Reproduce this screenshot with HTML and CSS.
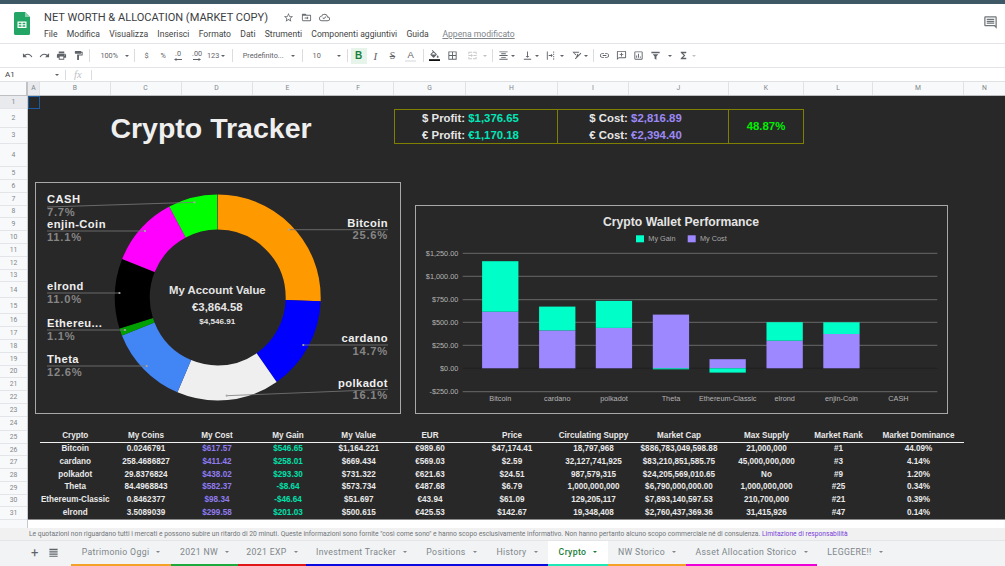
FILE: index.html
```html
<!DOCTYPE html>
<html lang="it">
<head>
<meta charset="utf-8">
<title>NET WORTH &amp; ALLOCATION (MARKET COPY)</title>
<link rel="stylesheet" href="styles.css">
</head>
<body>
<div class="app">
  <div class="strip"></div>
  <header class="doc">
    <svg class="logo" viewBox="0 0 16 23"><path class="logo-body" d="M1.500 0H11l5 5v16.500a1.500 1.500 0 0 1-1.500 1.500h-13A1.500 1.500 0 0 1 0 21.500v-20A1.500 1.500 0 0 1 1.500 0z"/><path class="logo-fold" d="M11 0l5 5h-5z"/><path class="logo-grid" d="M3.500 9.500h9v6.500h-9zM4.700 10.700v1.500h2.700v-1.500zm3.900 0v1.500h2.700v-1.500zM4.700 13.300v1.500h2.700v-1.500zm3.900 0v1.500h2.700v-1.500z" fill-rule="evenodd"/></svg>
    <div class="doc-main">
      <div class="doc-title">
        <span class="doc-name">NET WORTH &amp; ALLOCATION (MARKET COPY)</span>
        <svg class="doc-ico" viewBox="0 0 24 24"><path d="M22 9.240l-7.190-.62L12 2 9.190 8.630 2 9.240l5.460 4.730L5.820 21 12 17.270 18.180 21l-1.630-7.030L22 9.240zM12 15.400l-3.760 2.270 1-4.280-3.320-2.880 4.380-.38L12 6.100l1.710 4.040 4.380.38-3.320 2.880 1 4.280L12 15.400z"/></svg>
        <svg class="doc-ico" viewBox="0 0 24 24"><path d="M20 6h-8l-2-2H4c-1.100 0-2 .9-2 2v12c0 1.100.9 2 2 2h16c1.100 0 2-.9 2-2V8c0-1.100-.9-2-2-2zm0 12H4V8h16v10z"/><path d="M13 9.500l3.500 3.500-3.500 3.500v-2.500H8v-2h5z"/></svg>
        <svg class="doc-ico" viewBox="0 0 24 24"><path d="M19.350 10.040C18.670 6.590 15.640 4 12 4 9.110 4 6.600 5.640 5.350 8.040 2.340 8.360 0 10.910 0 14c0 3.310 2.690 6 6 6h13c2.760 0 5-2.240 5-5 0-2.640-2.050-4.780-4.650-4.960zM19 18H6c-2.210 0-4-1.790-4-4 0-2.050 1.530-3.760 3.560-3.970l1.070-.11.5-.95C8.080 7.140 9.940 6 12 6c2.620 0 4.880 1.860 5.390 4.430l.3 1.500 1.530.11c1.560.1 2.780 1.410 2.780 2.960 0 1.650-1.350 3-3 3z"/><path d="M10.500 16l-3-3 1.300-1.300 1.700 1.700 4-4 1.300 1.300z"/></svg>
      </div>
      <nav class="menu">
        <span>File</span><span>Modifica</span><span>Visualizza</span><span>Inserisci</span><span>Formato</span><span>Dati</span><span>Strumenti</span><span>Componenti aggiuntivi</span><span>Guida</span><span class="saved">Appena modificato</span>
      </nav>
    </div>
    <svg class="chat" viewBox="0 0 24 24"><path d="M21.990 4c0-1.100-.89-2-1.990-2H4c-1.100 0-2 .9-2 2v12c0 1.100.9 2 2 2h14l4 4-.01-18zM20 4v13.170L18.830 16H4V4h16z"/><path d="M6 6h12v2H6zm0 3h12v2H6zm0 3h12v2H6z"/></svg>
  </header>

  <div class="toolbar">
    <span class="tb"><svg viewBox="0 0 24 24"><path d="M12.500 8c-2.650 0-5.050.99-6.900 2.600L2 7v9h9l-3.620-3.620c1.390-1.160 3.160-1.880 5.120-1.880 3.540 0 6.550 2.310 7.600 5.500l2.370-.78C21.080 11.030 17.150 8 12.500 8z"/></svg></span>
    <span class="tb"><svg viewBox="0 0 24 24"><path d="M18.400 10.600C16.550 8.990 14.150 8 11.500 8c-4.650 0-8.580 3.030-9.960 7.220L3.900 16c1.050-3.190 4.050-5.500 7.600-5.500 1.950 0 3.730.72 5.120 1.880L13 16h9V7l-3.600 3.600z"/></svg></span>
    <span class="tb"><svg viewBox="0 0 24 24"><path d="M19 8H5c-1.660 0-3 1.340-3 3v6h4v4h12v-4h4v-6c0-1.660-1.340-3-3-3zm-3 11H8v-5h8v5zm3-7c-.55 0-1-.45-1-1s.45-1 1-1 1 .45 1 1-.45 1-1 1zm-1-9H6v4h12V3z"/></svg></span>
    <span class="tb"><svg viewBox="0 0 24 24"><path d="M18 4V3c0-.55-.45-1-1-1H5c-.55 0-1 .45-1 1v4c0 .55.45 1 1 1h12c.55 0 1-.45 1-1V6h1v4H9v11c0 .55.45 1 1 1h2c.55 0 1-.45 1-1v-9h8V4h-3z"/></svg></span>
    <i class="sep ml-2"></i>
    <span class="tb w17 ml-10h">100%</span><i class="caret ml-7"></i>
    <i class="sep ml-5h"></i>
    <span class="tb w16 ml-3">$</span>
    <span class="tb w16">%</span>
    <span class="tb tb-dec w13"><span>.0</span><svg viewBox="0 0 8 3"><path d="M8 1.100H2.500V0L0 1.500 2.500 3V1.900H8z"/></svg></span>
    <span class="tb tb-dec w20 ml-2h"><span>.00</span><svg viewBox="0 0 8 3"><path d="M0 1.100h5.500V0L8 1.500 5.500 3V1.900H0z"/></svg></span>
    <span class="tb w10 ml-1">123</span><i class="caret ml-2h"></i>
    <i class="sep ml-7"></i>
    <span class="tb w41 ml-10">Predefinito...</span><i class="caret ml-7h"></i>
    <i class="sep ml-7"></i>
    <span class="tb w8 ml-9h">10</span><i class="caret ml-16h"></i>
    <i class="sep ml-5h"></i>
    <span class="tb tb-b ml-3">B</span>
    <span class="tb tb-i">I</span>
    <span class="tb tb-s">S</span>
    <span class="tb tb-a ml-1"><span>A</span></span>
    <i class="sep ml-4"></i>
    <span class="tb tb-fill ml-2"><svg viewBox="0 0 24 24"><path d="M16.560 8.940L7.620 0 6.210 1.410l2.380 2.380-5.150 5.150c-.59.59-.59 1.540 0 2.120l5.500 5.500c.29.29.68.44 1.060.44s.77-.15 1.060-.44l5.500-5.500c.59-.58.59-1.530 0-2.120zM5.210 10L10 5.210 14.790 10H5.210zM19 11.500s-2 2.170-2 3.500c0 1.100.9 2 2 2s2-.9 2-2c0-1.330-2-3.500-2-3.500z"/><path class="fill-bar" d="M0 20h24v4H0z"/></svg></span>
    <span class="tb ml-1"><svg viewBox="0 0 24 24"><path d="M3 3v18h18V3H3zm8 16H5v-6h6v6zm0-8H5V5h6v6zm8 8h-6v-6h6v6zm0-8h-6V5h6v6z"/></svg></span>
    <span class="tb tb-off ml-2"><svg viewBox="0 0 24 24"><path d="M3 4h8v2H5v3H3zm10 0h8v5h-2V6h-6zM3 15h2v3h6v2H3zm16 0h2v5h-8v-2h6zM3 11h7l-2-2 1.500-.5L13 12l-3.500 3.500L8 15l2-2H3zm18 0v2h-7v-2z"/></svg></span><i class="caret caret-off ml-2"></i>
    <i class="sep ml-5h"></i>
    <span class="tb ml-1h"><svg viewBox="0 0 24 24"><path d="M7 15v2h10v-2H7zm-4 6h18v-2H3v2zm0-8h18v-2H3v2zm4-6v2h10V7H7zM3 3v2h18V3H3z"/></svg></span><i class="caret mr-neg"></i>
    <span class="tb ml-3h"><svg viewBox="0 0 24 24"><path d="M16 13h-3V3h-2v10H8l4 4 4-4zM4 19v2h16v-2H4z"/></svg></span><i class="caret mr-neg"></i>
    <span class="tb ml-3"><svg viewBox="0 0 24 24"><path d="M4 3h2v18H4zM18 3h2v3h-2zm0 5h2v3h-2zm0 5h2v3h-2zm0 5h2v3h-2zM8 11h5V8l4 4-4 4v-3H8z"/></svg></span><i class="caret ml-1"></i>
    <span class="tb ml-3"><svg viewBox="0 0 24 24"><path d="M3 4h15l-1 2H6.500l5 4-1.500 1.500zM21 6l1.500 1.500L10 20l-1.500-1.500zM14 8l2 1-3 8-2-1z"/></svg></span><i class="caret mr-neg"></i>
    <i class="sep ml-5"></i>
    <span class="tb ml-1h"><svg viewBox="0 0 24 24"><path d="M3.900 12c0-1.710 1.390-3.100 3.100-3.100h4V7H7c-2.760 0-5 2.240-5 5s2.240 5 5 5h4v-1.900H7c-1.710 0-3.100-1.390-3.100-3.100zM8 13h8v-2H8v2zm9-6h-4v1.900h4c1.710 0 3.100 1.390 3.100 3.100s-1.390 3.100-3.100 3.100h-4V17h4c2.760 0 5-2.240 5-5s-2.240-5-5-5z"/></svg></span>
    <span class="tb"><svg viewBox="0 0 24 24"><path d="M20 2H4c-1.100 0-2 .9-2 2v18l4-4h14c1.100 0 2-.9 2-2V4c0-1.100-.9-2-2-2zm0 14H6l-2 2V4h16v12z"/><path d="M13 6h-2v3H8v2h3v3h2v-3h3V9h-3z"/></svg></span>
    <span class="tb"><svg viewBox="0 0 24 24"><path d="M19 3H5c-1.100 0-2 .9-2 2v14c0 1.100.9 2 2 2h14c1.100 0 2-.9 2-2V5c0-1.100-.9-2-2-2zm0 16H5V5h14v14zM7 12h2v5H7zm4-4h2v9h-2zm4 6h2v3h-2z"/></svg></span>
    <span class="tb"><svg viewBox="0 0 24 24"><path d="M3 4h18v3H3zm3 5h12l-4 5v7l-4-2v-5z"/></svg></span><i class="caret ml-3h"></i>
    <span class="tb ml-3h"><svg viewBox="0 0 24 24"><path d="M18 4H6v2l6.500 6L6 18v2h12v-3h-7l5-5-5-5h7z"/></svg></span><i class="caret caret-off"></i>
  </div>

  <div class="formula">
    <span class="cellref">A1</span><i class="caret caret-ref"></i>
    <i class="sep sep-f"></i>
    <span class="fx">fx</span>
    <i class="sep sep-f"></i>
  </div>

  <div class="colhead">
    <span class="corner"></span>
    <span class="ch ch-a ch-on">A</span><span class="ch ch-b">B</span><span class="ch ch-n71">C</span><span class="ch ch-n71">D</span><span class="ch ch-n71">E</span><span class="ch ch-f">F</span><span class="ch ch-g">G</span><span class="ch ch-h">H</span><span class="ch ch-n71">I</span><span class="ch ch-j">J</span><span class="ch ch-k">K</span><span class="ch ch-l">L</span><span class="ch ch-m">M</span><span class="ch ch-last">N</span>
  </div>

  <div class="sheet">
    <div class="rowhead">
      <span class="rh rh-on r1">1</span><span class="rh r2">2</span><span class="rh r3">3</span><span class="rh r4">4</span><span class="rh r1">5</span><span class="rh">6</span><span class="rh">7</span><span class="rh">8</span><span class="rh">9</span><span class="rh">10</span><span class="rh">11</span><span class="rh">12</span><span class="rh">13</span><span class="rh r3">14</span><span class="rh r3">15</span><span class="rh">16</span><span class="rh">17</span><span class="rh">18</span><span class="rh">19</span><span class="rh">20</span><span class="rh">21</span><span class="rh">22</span><span class="rh">23</span><span class="rh r24">24</span><span class="rh r1">25</span><span class="rh r7">26</span><span class="rh r7">27</span><span class="rh r7">28</span><span class="rh r7">29</span><span class="rh r7">30</span><span class="rh r7">31</span><span class="rh"></span>
    </div>
    <div class="pane">
      <div class="cells">
        <div class="a1"></div>
        <h1 class="big-title">Crypto Tracker</h1>
        <div class="sum sum-1">
          <p>$ Profit: <b class="c-gain">$1,376.65</b></p>
          <p>€ Profit: <b class="c-gain">€1,170.18</b></p>
        </div>
        <div class="sum sum-2">
          <p>$ Cost: <b class="c-cost">$2,816.89</b></p>
          <p>€ Cost: <b class="c-cost">€2,394.40</b></p>
        </div>
        <div class="sum sum-3"><p class="c-pct">48.87%</p></div>

        <div class="tbl">
          <div class="th">Crypto</div><div class="th">My Coins</div><div class="th">My Cost</div><div class="th">My Gain</div><div class="th">My Value</div><div class="th">EUR</div><div class="th">Price</div><div class="th">Circulating Suppy</div><div class="th">Market Cap</div><div class="th">Max Supply</div><div class="th">Market Rank</div><div class="th">Market Dominance</div>
          <div>Bitcoin</div><div>0.0246791</div><div class="t-cost">$617.57</div><div class="t-gain">$546.65</div><div>$1,164.221</div><div>€989.60</div><div>$47,174.41</div><div>18,797,968</div><div>$886,783,049,598.88</div><div>21,000,000</div><div>#1</div><div>44.09%</div>
          <div>cardano</div><div>258.4686827</div><div class="t-cost">$411.42</div><div class="t-gain">$258.01</div><div>$669.434</div><div>€569.03</div><div>$2.59</div><div>32,127,741,925</div><div>$83,210,851,585.75</div><div>45,000,000,000</div><div>#3</div><div>4.14%</div>
          <div>polkadot</div><div>29.8376824</div><div class="t-cost">$438.02</div><div class="t-gain">$293.30</div><div>$731.322</div><div>€621.63</div><div>$24.51</div><div>987,579,315</div><div>$24,205,569,010.65</div><div>No</div><div>#9</div><div>1.20%</div>
          <div>Theta</div><div>84.4968843</div><div class="t-cost">$582.37</div><div class="t-gain">-$8.64</div><div>$573.734</div><div>€487.68</div><div>$6.79</div><div>1,000,000,000</div><div>$6,790,000,000.00</div><div>1,000,000,000</div><div>#25</div><div>0.34%</div>
          <div>Ethereum-Classic</div><div>0.8462377</div><div class="t-cost">$98.34</div><div class="t-gain">-$46.64</div><div>$51.697</div><div>€43.94</div><div>$61.09</div><div>129,205,117</div><div>$7,893,140,597.53</div><div>210,700,000</div><div>#21</div><div>0.39%</div>
          <div>elrond</div><div>3.5089039</div><div class="t-cost">$299.58</div><div class="t-gain">$201.03</div><div>$500.615</div><div>€425.53</div><div>$142.67</div><div>19,348,408</div><div>$2,760,437,369.36</div><div>31,415,926</div><div>#47</div><div>0.14%</div>
        </div>
      </div>

      <figure class="chart chart-pie">
        <svg viewBox="36 183 364 230">
          <g class="donut" transform="rotate(-90 217.700 297.500)">
            <circle class="s" cx="217.700" cy="297.500" r="85.500" pathLength="100" stroke="#ff9900" stroke-dasharray="25.6 74.4" stroke-dashoffset="0"/>
            <circle class="s" cx="217.700" cy="297.500" r="85.500" pathLength="100" stroke="#0000ff" stroke-dasharray="14.7 85.3" stroke-dashoffset="-25.6"/>
            <circle class="s" cx="217.700" cy="297.500" r="85.500" pathLength="100" stroke="#efefef" stroke-dasharray="16.1 83.9" stroke-dashoffset="-40.3"/>
            <circle class="s" cx="217.700" cy="297.500" r="85.500" pathLength="100" stroke="#4285f4" stroke-dasharray="12.6 87.4" stroke-dashoffset="-56.4"/>
            <circle class="s" cx="217.700" cy="297.500" r="85.500" pathLength="100" stroke="#00a000" stroke-dasharray="1.1 98.9" stroke-dashoffset="-69"/>
            <circle class="s" cx="217.700" cy="297.500" r="85.500" pathLength="100" stroke="#000000" stroke-dasharray="11 89" stroke-dashoffset="-70.1"/>
            <circle class="s" cx="217.700" cy="297.500" r="85.500" pathLength="100" stroke="#ff00ff" stroke-dasharray="11.1 88.9" stroke-dashoffset="-81.1"/>
            <circle class="s" cx="217.700" cy="297.500" r="85.500" pathLength="100" stroke="#00ff00" stroke-dasharray="7.7 92.3" stroke-dashoffset="-92.2"/>
          </g>
          <g class="leaders">
            <path d="M47 207L194.300 202.300M47 231H145M47 293H119.500M47 330H125M47 366H146.700M388 229.700H288.700M388 345H303.300M388 389.300L226.700 395.700"/>
          </g>
          <g class="dots">
            <circle cx="194.300" cy="202.300" r="1.100"/><circle cx="145" cy="231" r="1.100"/><circle cx="119.500" cy="293" r="1.100"/><circle cx="125" cy="330" r="1.100"/><circle cx="146.700" cy="366" r="1.100"/><circle cx="288.700" cy="229.700" r="1.100"/><circle cx="303.300" cy="345" r="1.100"/><circle cx="226.700" cy="395.700" r="1.100"/>
          </g>
          <text class="lb" x="47" y="203.300">CASH</text><text class="pc" x="47" y="215.700">7.7%</text>
          <text class="lb" x="47" y="228.300">enjin-Coin</text><text class="pc" x="47" y="241">11.1%</text>
          <text class="lb" x="47" y="290">elrond</text><text class="pc" x="47" y="302.700">11.0%</text>
          <text class="lb" x="47" y="326.700">Ethereu...</text><text class="pc" x="47" y="339.700">1.1%</text>
          <text class="lb" x="47" y="363">Theta</text><text class="pc" x="47" y="375.700">12.6%</text>
          <text class="lb end" x="388" y="226.700">Bitcoin</text><text class="pc end" x="388" y="239.300">25.6%</text>
          <text class="lb end" x="388" y="342.300">cardano</text><text class="pc end" x="388" y="355">14.7%</text>
          <text class="lb end" x="388" y="386.700">polkadot</text><text class="pc end" x="388" y="399">16.1%</text>
          <text class="ctr ctr-1" x="217.300" y="294.300">My Account Value</text>
          <text class="ctr ctr-1" x="217.300" y="311">€3,864.58</text>
          <text class="ctr ctr-2" x="217.300" y="324.300">$4,546.91</text>
        </svg>
      </figure>

      <figure class="chart chart-bar">
        <svg viewBox="416 206 531 207">
          <text class="bt" x="681" y="225.700">Crypto Wallet Performance</text>
          <rect class="gain" x="636" y="235.300" width="8" height="7"/><text class="lg" x="648.300" y="241.300">My Gain</text>
          <rect class="cost" x="687.700" y="235.300" width="8" height="7"/><text class="lg" x="700" y="241.300">My Cost</text>
          <g class="gl">
            <path d="M462.700 253.300H937.300M462.700 276.300H937.300M462.700 299.700H937.300M462.700 322.300H937.300M462.700 345.300H937.300M462.700 391.700H937.300"/>
          </g>
          <path class="gl0" d="M462.700 368.300H937.300"/>
          <text class="ax" x="458.300" y="255.900">$1,250.00</text>
          <text class="ax" x="458.300" y="278.900">$1,000.00</text>
          <text class="ax" x="458.300" y="302.300">$750.00</text>
          <text class="ax" x="458.300" y="324.900">$500.00</text>
          <text class="ax" x="458.300" y="347.900">$250.00</text>
          <text class="ax" x="458.300" y="370.900">$0.00</text>
          <text class="ax" x="458.300" y="394.300">-$250.00</text>
          <rect class="cost" x="482.100" y="311.700" width="36.300" height="56.600"/><rect class="gain" x="482.100" y="261.200" width="36.300" height="50.500"/>
          <rect class="cost" x="539.100" y="330.400" width="36.300" height="37.900"/><rect class="gain" x="539.100" y="306.600" width="36.300" height="23.800"/>
          <rect class="cost" x="595.800" y="327.900" width="36.300" height="40.400"/><rect class="gain" x="595.800" y="300.900" width="36.300" height="27"/>
          <rect class="cost" x="652.800" y="314.600" width="36.300" height="53.700"/><rect class="gain" x="652.800" y="368.300" width="36.300" height="1"/>
          <rect class="cost" x="709.500" y="359.200" width="36.300" height="9.100"/><rect class="gain" x="709.500" y="368.300" width="36.300" height="4.300"/>
          <rect class="cost" x="766.500" y="340.700" width="36.300" height="27.600"/><rect class="gain" x="766.500" y="322.200" width="36.300" height="18.500"/>
          <rect class="cost" x="823.300" y="334" width="36.300" height="34.300"/><rect class="gain" x="823.300" y="322.300" width="36.300" height="11.700"/>
          <text class="cat" x="500.300" y="400.700">Bitcoin</text>
          <text class="cat" x="557.300" y="400.700">cardano</text>
          <text class="cat" x="614" y="400.700">polkadot</text>
          <text class="cat" x="671" y="400.700">Theta</text>
          <text class="cat" x="727.700" y="400.700">Ethereum-Classic</text>
          <text class="cat" x="784.700" y="400.700">elrond</text>
          <text class="cat" x="841.500" y="400.700">enjin-Coin</text>
          <text class="cat" x="898.400" y="400.700">CASH</text>
        </svg>
      </figure>
    </div>
  </div>

  <div class="notice">Le quotazioni non riguardano tutti i mercati e possono subire un ritardo di 20 minuti. Queste informazioni sono fornite "così come sono" e hanno scopo esclusivamente informativo. Non hanno pertanto alcuno scopo commerciale né di consulenza. <a class="notice-link">Limitazione di responsabilità</a></div>

  <div class="tabs">
    <div class="tab-tools">
      <span class="plus">+</span>
      <svg class="allsheets" viewBox="0 0 24 24"><path d="M3 4h18v3H3zm0 5h18v3H3zm0 5h18v3H3zm0 5h18v2H3z"/></svg>
    </div>
    <span class="tab t-pat st-orange">Patrimonio Oggi<i class="caret caret-tab"></i></span>
    <span class="tab t-nw st-green">2021 NW<i class="caret caret-tab"></i></span>
    <span class="tab t-exp st-red">2021 EXP<i class="caret caret-tab"></i></span>
    <span class="tab t-inv st-blue">Investment Tracker<i class="caret caret-tab"></i></span>
    <span class="tab t-pos st-blue">Positions<i class="caret caret-tab"></i></span>
    <span class="tab t-his st-blue">History<i class="caret caret-tab"></i></span>
    <span class="tab t-cry st-teal tab-on">Crypto<i class="caret caret-tab"></i></span>
    <span class="tab t-sto st-orange">NW Storico<i class="caret caret-tab"></i></span>
    <span class="tab t-ass st-mag">Asset Allocation Storico<i class="caret caret-tab"></i></span>
    <span class="tab t-leg st-none">LEGGERE!!<i class="caret caret-tab"></i></span>
    <span class="tab-rest"></span>
  </div>
</div>
</body>
</html>
```
FILE: styles.css
```css
* { box-sizing: border-box; margin: 0; padding: 0; }
html, body { height: 100%; overflow: hidden; background: #fff; }
body { font-family: Roboto, "Liberation Sans", sans-serif; color: #3c4043; }
.app { width: 1005px; height: 566px; display: flex; flex-direction: column; overflow: hidden; }
i { font-style: normal; }

.strip { height: 4px; background: #3f5866; flex: none; }

/* document header */
.doc { height: 40px; flex: none; display: flex; align-items: flex-start; border-bottom: 1px solid #e3e5e8; }
.logo { width: 16px; height: 23px; margin: 8px 0 0 14px; flex: none; }
.logo-body { fill: #23a566; }
.logo-fold { fill: #8ed1b1; }
.logo-grid { fill: #fff; }
.doc-main { margin-left: 14px; flex: 1; }
.doc-title { display: flex; align-items: center; height: 17px; margin-top: 4.500px; }
.doc-name { font-size: 11.050px; color: #3c4043; width: 238.500px; white-space: nowrap; }
.doc-ico { width: 11px; height: 11px; fill: #6b6f73; margin-right: 7px; flex: none; }
.menu { display: flex; font-size: 8.600px; color: #444; margin-top: 2.500px; gap: 9.250px; line-height: 12px; }
.saved { color: #80868b; text-decoration: underline; margin-left: 4.500px; }
.chat { width: 15px; height: 15px; fill: #70757a; flex: none; margin: 11px 7px 0 0; }

/* toolbar: every control sits at the reference's own spacing */
.toolbar { height: 24px; flex: none; display: flex; align-items: center; border-bottom: 1px solid #e3e5e8; padding-left: 18.500px; }
.tb { width: 17.200px; height: 16px; display: flex; align-items: center; justify-content: center; flex: none; font-size: 7.300px; color: #5f6368; white-space: nowrap; }
.tb svg { width: 11px; height: 11px; fill: #5f6368; }
.sep { width: 1px; height: 13px; background: #dadce0; flex: none; }
.caret { width: 0; height: 0; border-left: 2.500px solid transparent; border-right: 2.500px solid transparent; border-top: 2.500px solid #5f6368; flex: none; }
.ml-1 { margin-left: 1px; }
.ml-1h { margin-left: 1.500px; }
.ml-2 { margin-left: 2px; }
.ml-2h { margin-left: 2.500px; }
.ml-3 { margin-left: 3px; }
.ml-3h { margin-left: 3.500px; }
.ml-4 { margin-left: 4px; }
.ml-5 { margin-left: 5px; }
.ml-5h { margin-left: 5.500px; }
.ml-7 { margin-left: 7px; }
.ml-7h { margin-left: 7.500px; }
.ml-9h { margin-left: 9.500px; }
.ml-10 { margin-left: 10px; }
.ml-10h { margin-left: 10.500px; }
.ml-16h { margin-left: 16.500px; }
.mr-neg { margin-left: -.7px; }
.w8 { width: 8px; }
.w10 { width: 10px; }
.w13 { width: 13px; }
.w16 { width: 16.700px; }
.w17 { width: 17px; }
.w20 { width: 20px; }
.w41 { width: 41px; }
.tb-dec { flex-direction: column; line-height: 8px; font-size: 7.300px; }
.tb-dec svg { width: 8px; height: 3px; }
.tb-b { font-family: "Liberation Sans", sans-serif; width: 16px; background: #e6f4ea; color: #188038; font-weight: 700; font-size: 10px; }
.tb-i { font-family: "Liberation Serif", serif; font-style: italic; font-size: 11px; }
.tb-s { font-family: "Liberation Serif", serif; font-size: 10px; text-decoration: line-through; }
.tb-a { font-family: "Liberation Sans", sans-serif; font-size: 9.500px; }
.tb-a span { border-bottom: 2px solid #e8eaed; padding: 0 2px; line-height: 11px; }
.fill-bar { fill: #111; }
.tb-off svg { fill: #c8cacc; }
.caret-off { border-top-color: #bdc1c6; }

/* formula bar */
.formula { height: 14px; flex: none; display: flex; align-items: center; border-bottom: 1px solid #dfe1e5; }
.cellref { font-size: 8px; color: #3c4043; margin-left: 5px; width: 50px; }
.caret-ref { margin-right: 3px; }
.sep-f { height: 10px; margin: 0 8px 0 3px; }
.fx { font-family: "Liberation Serif", serif; font-style: italic; font-size: 10.500px; color: #bdc1c6; width: 14px; }

/* column headers */
.colhead { height: 14px; flex: none; display: flex; background: #f8f9fa; border-bottom: 1px solid #bdbfc2; }
.corner { width: 28px; flex: none; border-right: 2px solid #c0c2c5; }
.ch { flex: none; font-size: 6.800px; color: #80868b; text-align: center; line-height: 13px; border-right: 1px solid #e0e2e5; }
.ch-on { background: #e8eaed; }
.ch-a { width: 12px; }
.ch-b { width: 70.500px; }
.ch-n71 { width: 71px; }
.ch-f { width: 70.500px; }
.ch-g { width: 72px; }
.ch-h { width: 92px; }
.ch-j { width: 100px; }
.ch-k { width: 75px; }
.ch-l { width: 69px; }
.ch-m { width: 91px; }
.ch-last { width: 41px; border-right: 0; }

/* sheet */
.sheet { height: 432px; flex: none; display: flex; background: #fff; }
.rowhead { width: 28px; flex: none; display: flex; flex-direction: column; background: #f8f9fa; border-right: 1px solid #c8cacd; }
.rh { height: 12.800px; flex: none; font-size: 6.800px; color: #80868b; display: flex; align-items: center; justify-content: center; border-bottom: 1px solid #e3e5e8; }
.rh-on { background: #e8eaed; }
.r1 { height: 13px; }
.r2 { height: 18.500px; }
.r3 { height: 16px; }
.r4 { height: 23.500px; }
.r24 { height: 14px; }
.r7 { height: 12.700px; }
.pane { flex: 1; position: relative; }
.cells {
  height: 424px;
  background: #282828;
  border-bottom: 1px solid #8a8a8a;
  display: grid;
  grid-template-columns: 12px 70.500px 71px 71px 71px 70.500px 72px 92px 71px 100px 75px 69px 91px 41px;
  grid-template-rows: 13px 18.500px 16px 23.500px 13px repeat(8, 12.750px) 16px 16px repeat(8, 12.800px) 14px 13px repeat(6, 12.700px);
}
.a1 { grid-column: 1; grid-row: 1; border: 1.500px solid #1c5c9e; }
.big-title { grid-column: 1 / 7; grid-row: 2 / 4; padding-top: 1.500px; font: 700 28.500px/34px "Liberation Sans", sans-serif; color: #efefef; text-align: center; }
.sum { grid-row: 2 / 4; border: 1px solid #808000; border-left: 0; padding-top: 1.500px; font: 700 11.400px/17.400px "Liberation Sans", sans-serif; color: #e6e6e6; text-align: center; display: flex; flex-direction: column; justify-content: center; }
.sum-1 { grid-column: 7 / 9; border-left: 1px solid #808000; padding-right: 11px; }
.sum-2 { grid-column: 9 / 11; padding-right: 15px; }
.sum-3 { grid-column: 11; }
.c-gain { color: #00e6b8; }
.c-cost { color: #9c88f5; }
.c-pct { color: #00f000; }
.tbl {
  grid-column: 2 / 14;
  grid-row: 25 / 32;
  display: grid;
  grid-template-columns: 70.500px 71px 71px 71px 70.500px 72px 92px 71px 100px 75px 69px 91px;
  grid-template-rows: 13px repeat(6, 12.700px);
  font: 700 8.130px/12.700px "Liberation Sans", sans-serif;
  color: #e9e9e9;
  text-align: center;
  white-space: nowrap;
}
.th { border-bottom: 1.500px solid #f0f0f0; }
.t-cost { color: #8f7cf0; }
.t-gain { color: #00e0ac; }

/* charts float over the grid */
.chart { position: absolute; background: #282828; border: 1px solid #a8a8a8; }
.chart svg { display: block; width: 100%; height: 100%; }
.chart-pie { left: 7px; top: 86px; width: 366px; height: 232px; }
.chart-bar { left: 387px; top: 109px; width: 533px; height: 209px; }
.s { fill: none; stroke-width: 35px; }
.leaders path { fill: none; stroke: #7a7a7a; stroke-width: .8px; }
.dots circle { fill: #aaa; }
svg text { font-family: "Liberation Sans", sans-serif; }
.lb { font-size: 11.200px; letter-spacing: .42px; font-weight: 700; fill: #efefef; }
.pc { font-size: 11.200px; letter-spacing: .75px; font-weight: 700; fill: #858585; }
.end { text-anchor: end; }
.ctr { text-anchor: middle; font-weight: 700; fill: #e4e4e4; }
.ctr-1 { font-size: 11.350px; }
.ctr-2 { font-size: 8.100px; }
.bt { font-size: 12.200px; font-weight: 700; fill: #e4e4e4; text-anchor: middle; }
.lg { font-size: 7.300px; fill: #a8a8a8; }
.gain { fill: #00ffc8; }
.cost { fill: #9d88ff; }
.gl path { stroke: #7a7a7a; stroke-width: .8px; fill: none; }
.gl0 { stroke: #1e1e1e; stroke-width: .8px; fill: none; }
.ax { font-size: 7.300px; fill: #b4b4b4; text-anchor: end; }
.cat { font-size: 7.300px; fill: #b4b4b4; text-anchor: middle; }

/* notice + tabs */
.notice { height: 12px; flex: none; background: #f1f1f1; font-size: 6.720px; line-height: 13px; color: #70757a; padding-left: 29px; white-space: nowrap; overflow: hidden; }
.notice-link { color: #7a3fd8; }
.tabs { height: 26px; flex: none; display: flex; background: #f1f3f4; border-top: 1px solid #e3e5e8; }
.tab-tools { width: 71px; flex: none; display: flex; align-items: center; color: #5f6368; padding: 0 0 2px 31px; }
.plus { font-size: 13px; width: 17px; line-height: 12px; }
.allsheets { width: 11px; height: 11px; fill: #5f6368; }
.tab { flex: none; height: 25px; display: flex; align-items: center; justify-content: center; gap: 7px; font-size: 8.700px; letter-spacing: .04em; color: #80868b; padding-bottom: 1px; border-bottom: 2px solid transparent; box-shadow: 0 1px 0 #1a1a1a; white-space: nowrap; }
.caret-tab { border-top-color: #80868b; }
.tab-on { background: #fff; color: #188038; font-weight: 500; }
.tab-on .caret-tab { border-top-color: #188038; }
.t-pat { width: 100px; }
.t-nw { width: 67px; }
.t-exp { width: 68px; }
.t-inv { width: 111px; }
.t-pos { width: 69px; }
.t-his { width: 62px; }
.t-cry { width: 60px; }
.t-sto { width: 78px; }
.t-ass { width: 131px; }
.t-leg { width: 76px; }
.st-orange { border-bottom-color: #f4a128; }
.st-green { border-bottom-color: #1ea93c; }
.st-red { border-bottom-color: #e01616; }
.st-blue { border-bottom-color: #0a0ae0; }
.st-teal { border-bottom-color: #1de9b6; }
.st-mag { border-bottom-color: #ee00d8; }
.tab-rest { flex: 1; box-shadow: 0 1px 0 #1a1a1a; height: 25px; }
```
